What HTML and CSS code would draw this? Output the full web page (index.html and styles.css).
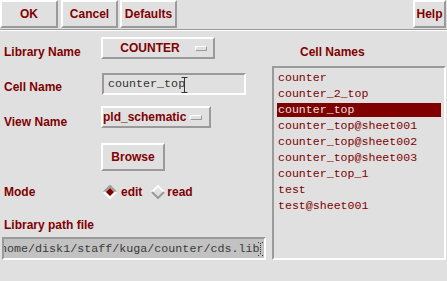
FILE: index.html
```html
<!DOCTYPE html>
<html>
<head>
<meta charset="utf-8">
<title>Open File</title>
<link rel="stylesheet" href="styles.css">
</head>
<body>
<div class="win">
  <div class="toolbar">
    <div class="btn tb ok">OK</div>
    <div class="btn tb cancel">Cancel</div>
    <div class="btn tb defaults">Defaults</div>
    <div class="btn tb help">Help</div>
  </div>
  <div class="sep"></div>
  <div class="main">
    <div class="form">
      <div class="row r-lib">
        <span class="label lb-lib">Library Name</span>
        <div class="btn menu menu-lib"><span class="mtext center">COUNTER</span><span class="ind"></span></div>
      </div>
      <div class="row r-cell">
        <span class="label lb-cell">Cell Name</span>
        <div class="field cell-field"><span class="ftext">counter_top</span><svg class="ibeam" width="7" height="16" viewBox="0 0 7 16"><path d="M0.5 0.5H6.5M3.5 0.5V15.5M0.5 15.5H6.5" stroke="#333" stroke-width="1" fill="none"/></svg></div>
      </div>
      <div class="row r-view">
        <span class="label lb-view">View Name</span>
        <div class="btn menu menu-view"><span class="mtext">pld_schematic</span><span class="ind"></span></div>
      </div>
      <div class="row r-browse">
        <span class="label"></span>
        <div class="btn browse">Browse</div>
      </div>
      <div class="row r-mode">
        <span class="label">Mode</span>
        <div class="radios">
          <span class="radio">
            <svg width="14" height="14" viewBox="0 0 14 14"><path d="M1 7L7 1L13 7" stroke="#9a9a9a" stroke-width="2" fill="none"/><path d="M1 7L7 13L13 7" stroke="#ffffff" stroke-width="2" fill="none"/><polygon points="7,3 11,7 7,11 3,7" fill="#800000"/></svg>
            <span class="rtext">edit</span>
          </span>
          <span class="radio">
            <svg width="14" height="14" viewBox="0 0 14 14"><path d="M1 7L7 1L13 7" stroke="#ffffff" stroke-width="2" fill="none"/><path d="M1 7L7 13L13 7" stroke="#9a9a9a" stroke-width="2" fill="none"/></svg>
            <span class="rtext">read</span>
          </span>
        </div>
      </div>
      <div class="row r-pathlabel">
        <span class="label">Library path file</span>
      </div>
      <div class="field path-field"><span class="ftext path-text">/home/disk1/staff/kuga/counter/cds.lib</span><svg class="dcursor" width="5" height="14" viewBox="0 0 5 14"><path d="M0 0.5H1M4 0.5H5M2.5 1V13M0 13.5H1M4 13.5H5" stroke="#333" stroke-width="1" stroke-dasharray="1 1" fill="none"/></svg></div>
    </div>
    <div class="side">
      <div class="side-title">Cell Names</div>
      <div class="list">
        <div class="item">counter</div>
        <div class="item">counter_2_top</div>
        <div class="item sel">counter_top</div>
        <div class="item">counter_top@sheet001</div>
        <div class="item">counter_top@sheet002</div>
        <div class="item">counter_top@sheet003</div>
        <div class="item">counter_top_1</div>
        <div class="item">test</div>
        <div class="item">test@sheet001</div>
      </div>
    </div>
  </div>
</div>
</body>
</html>
```

FILE: styles.css
```css
html, body {
  margin: 0;
  padding: 0;
  background: #e0e0e0;
}
body {
  width: 447px;
  height: 281px;
  overflow: hidden;
  font-family: "Liberation Sans", Arial, sans-serif;
  font-weight: bold;
  font-size: 12px;
  color: #800000;
}
.win {
  width: 447px;
  height: 281px;
}
.btn {
  box-sizing: border-box;
  border: 2px solid;
  border-color: #ffffff #9a9a9a #9a9a9a #ffffff;
  background: #e0e0e0;
  display: flex;
  align-items: center;
  justify-content: center;
  white-space: nowrap;
}
.toolbar {
  display: flex;
  height: 29px;
  align-items: flex-start;
}
.tb {
  height: 28px;
}
.ok { width: 58px; }
.cancel { width: 57px; margin-left: 3px; }
.defaults { width: 57px; margin-left: 2px; }
.help { width: 33px; margin-left: auto; margin-right: 1px; }
.sep {
  height: 0;
  border-top: 1px solid #9a9a9a;
  border-bottom: 1px solid #ffffff;
}
.main {
  display: flex;
}
.form {
  width: 268px;
  padding-left: 4px;
  box-sizing: border-box;
  display: flex;
  flex-direction: column;
}
.row {
  display: flex;
  align-items: center;
}
.label {
  width: 97px;
  flex: none;
  white-space: nowrap;
}
.r-lib { margin-top: 6px; height: 22px; }
.lb-lib { padding-top: 8px; }
.r-cell { margin-top: 14px; height: 22px; }
.lb-cell { padding-top: 6px; }
.r-view { margin-top: 11px; height: 22px; }
.lb-view { padding-top: 10px; }
.r-browse { margin-top: 15px; height: 28px; }
.r-mode { margin-top: 14px; height: 14px; }
.r-pathlabel { margin-top: 19px; height: 14px; }

.menu {
  height: 22px;
  justify-content: flex-start;
}
.menu-lib { width: 114px; }
.menu-view { width: 110px; }
.mtext.center {
  flex: 1;
  text-align: center;
  padding-left: 6px;
}
.ind {
  flex: none;
  box-sizing: border-box;
  width: 12px;
  height: 5px;
  border: 1px solid;
  border-color: #ffffff #9a9a9a #9a9a9a #ffffff;
  margin-left: 4px;
}
.menu-lib .ind { margin-right: 6px; }
.browse {
  width: 64px;
  height: 28px;
}
.field {
  box-sizing: border-box;
  height: 22px;
  border: 2px solid;
  border-color: #9a9a9a #ffffff #ffffff #9a9a9a;
  display: flex;
  align-items: center;
  overflow: hidden;
  white-space: nowrap;
  font-family: "Liberation Mono", "Courier New", monospace;
  font-weight: normal;
  font-size: 11.7px;
  color: #333333;
}
.cell-field {
  width: 144px;
  margin-left: 1px;
  padding-left: 4px;
}
.ibeam {
  flex: none;
  margin-left: -4px;
  margin-top: 2px;
}
.path-field {
  width: 264px;
  margin-left: -2px;
  margin-top: 5px;
  height: 23px;
  background: #c2c2c2;
  color: #3a3a3a;
}
.path-text {
  margin-left: -11px;
}
.dcursor {
  flex: none;
  margin-left: -2px;
}
.radios {
  display: flex;
  align-items: center;
  margin-left: 2px;
}
.radio {
  display: flex;
  align-items: center;
}
.radio + .radio {
  margin-left: 9px;
}
.rtext {
  margin-left: 4px;
}
.radio + .radio .rtext {
  margin-left: 2px;
}
.side {
  flex: 1;
  display: flex;
  flex-direction: column;
  padding-left: 4px;
}
.side-title {
  margin-top: 14px;
  height: 14px;
  line-height: 14px;
  padding-left: 28px;
}
.list {
  margin-top: 7px;
  box-sizing: border-box;
  width: 174px;
  height: 194px;
  border: 2px solid;
  border-color: #9a9a9a #ffffff #ffffff #9a9a9a;
  padding: 3px 3px 2px;
  display: flex;
  flex-direction: column;
  gap: 2px;
  font-family: "Liberation Mono", "Courier New", monospace;
  font-weight: normal;
  font-size: 11.6px;
}
.item {
  height: 14px;
  line-height: 14px;
  padding-left: 1px;
  white-space: nowrap;
}
.item.sel {
  background: #800000;
  color: #e0e0e0;
}
```
